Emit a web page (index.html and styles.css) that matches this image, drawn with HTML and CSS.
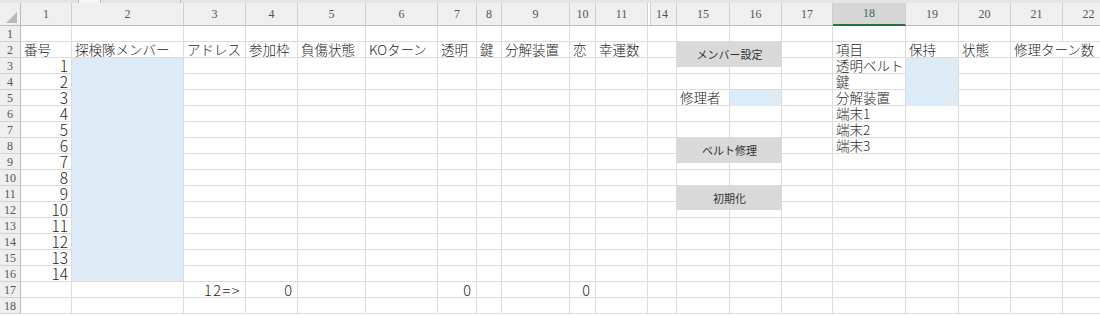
FILE: index.html
```html
<!DOCTYPE html>
<html lang="ja">
<head>
<meta charset="utf-8">
<title>シート</title>
<link rel="stylesheet" href="styles.css">
</head>
<body>
<div class="app">
  <div class="topbar"><i class="seg s1"></i><i class="seg s2"></i><i class="seg s3"></i></div>
  <div class="sheet">
    <div class="row colhead">
      <span class="corner"><i class="tri"></i></span><span>1</span><span>2</span><span>3</span><span>4</span><span>5</span><span>6</span><span>7</span><span>8</span><span>9</span><span>10</span><span>11</span><span class="hid">14</span><span>15</span><span>16</span><span>17</span><span class="sel">18</span><span>19</span><span>20</span><span>21</span><span>22</span>
    </div>
    <div class="row"><span class="rh">1</span><span></span><span></span><span></span><span></span><span></span><span></span><span></span><span></span><span></span><span></span><span></span><span></span><span></span><span></span><span></span><span></span><span></span><span></span><span></span><span></span></div>
    <div class="row"><span class="rh">2</span><span>番号</span><span>探検隊メンバー</span><span>アドレス</span><span>参加枠</span><span>負傷状態</span><span>KOターン</span><span>透明</span><span>鍵</span><span>分解装置</span><span>恋</span><span>幸運数</span><span></span><span></span><span></span><span></span><span>項目</span><span>保持</span><span>状態</span><span class="ov">修理ターン数</span><span></span></div>
    <div class="row"><span class="rh">3</span><span class="num">1</span><span class="fill"></span><span></span><span></span><span></span><span></span><span></span><span></span><span></span><span></span><span></span><span></span><span></span><span></span><span></span><span>透明ベルト</span><span class="fill"></span><span></span><span></span><span></span></div>
    <div class="row"><span class="rh">4</span><span class="num">2</span><span class="fill"></span><span></span><span></span><span></span><span></span><span></span><span></span><span></span><span></span><span></span><span></span><span></span><span></span><span></span><span>鍵</span><span class="fill"></span><span></span><span></span><span></span></div>
    <div class="row"><span class="rh">5</span><span class="num">3</span><span class="fill"></span><span></span><span></span><span></span><span></span><span></span><span></span><span></span><span></span><span></span><span></span><span>修理者</span><span class="fill"></span><span></span><span>分解装置</span><span class="fill"></span><span></span><span></span><span></span></div>
    <div class="row"><span class="rh">6</span><span class="num">4</span><span class="fill"></span><span></span><span></span><span></span><span></span><span></span><span></span><span></span><span></span><span></span><span></span><span></span><span></span><span></span><span>端末1</span><span></span><span></span><span></span><span></span></div>
    <div class="row"><span class="rh">7</span><span class="num">5</span><span class="fill"></span><span></span><span></span><span></span><span></span><span></span><span></span><span></span><span></span><span></span><span></span><span></span><span></span><span></span><span>端末2</span><span></span><span></span><span></span><span></span></div>
    <div class="row"><span class="rh">8</span><span class="num">6</span><span class="fill"></span><span></span><span></span><span></span><span></span><span></span><span></span><span></span><span></span><span></span><span></span><span></span><span></span><span></span><span>端末3</span><span></span><span></span><span></span><span></span></div>
    <div class="row"><span class="rh">9</span><span class="num">7</span><span class="fill"></span><span></span><span></span><span></span><span></span><span></span><span></span><span></span><span></span><span></span><span></span><span></span><span></span><span></span><span></span><span></span><span></span><span></span><span></span></div>
    <div class="row"><span class="rh">10</span><span class="num">8</span><span class="fill"></span><span></span><span></span><span></span><span></span><span></span><span></span><span></span><span></span><span></span><span></span><span></span><span></span><span></span><span></span><span></span><span></span><span></span><span></span></div>
    <div class="row"><span class="rh">11</span><span class="num">9</span><span class="fill"></span><span></span><span></span><span></span><span></span><span></span><span></span><span></span><span></span><span></span><span></span><span></span><span></span><span></span><span></span><span></span><span></span><span></span><span></span></div>
    <div class="row"><span class="rh">12</span><span class="num">10</span><span class="fill"></span><span></span><span></span><span></span><span></span><span></span><span></span><span></span><span></span><span></span><span></span><span></span><span></span><span></span><span></span><span></span><span></span><span></span><span></span></div>
    <div class="row"><span class="rh">13</span><span class="num">11</span><span class="fill"></span><span></span><span></span><span></span><span></span><span></span><span></span><span></span><span></span><span></span><span></span><span></span><span></span><span></span><span></span><span></span><span></span><span></span><span></span></div>
    <div class="row"><span class="rh">14</span><span class="num">12</span><span class="fill"></span><span></span><span></span><span></span><span></span><span></span><span></span><span></span><span></span><span></span><span></span><span></span><span></span><span></span><span></span><span></span><span></span><span></span><span></span></div>
    <div class="row"><span class="rh">15</span><span class="num">13</span><span class="fill"></span><span></span><span></span><span></span><span></span><span></span><span></span><span></span><span></span><span></span><span></span><span></span><span></span><span></span><span></span><span></span><span></span><span></span><span></span></div>
    <div class="row"><span class="rh">16</span><span class="num">14</span><span class="fill last"></span><span></span><span></span><span></span><span></span><span></span><span></span><span></span><span></span><span></span><span></span><span></span><span></span><span></span><span></span><span></span><span></span><span></span><span></span></div>
    <div class="row"><span class="rh">17</span><span></span><span></span><span class="val arrow">12=&gt;</span><span class="val">0</span><span></span><span></span><span class="val">0</span><span></span><span></span><span class="val">0</span><span></span><span></span><span></span><span></span><span></span><span></span><span></span><span></span><span></span><span></span></div>
    <div class="row"><span class="rh">18</span><span></span><span></span><span></span><span></span><span></span><span></span><span></span><span></span><span></span><span></span><span></span><span></span><span></span><span></span><span></span><span></span><span></span><span></span><span></span><span></span></div>
  </div>
  <div class="btn b1">メンバー設定</div>
  <div class="btn b2">ベルト修理</div>
  <div class="btn b3">初期化</div>
</div>
</body>
</html>
```

FILE: styles.css
```css
* {
  box-sizing: border-box;
  margin: 0;
  padding: 0;
}

body {
  width: 1100px;
  height: 315px;
  overflow: hidden;
  background: #ffffff;
  font-family: "Noto Sans CJK JP", "Noto Sans", sans-serif;
  font-weight: 300;
  color: #262626;
}

.app {
  position: relative;
  width: 1100px;
  height: 315px;
  overflow: hidden;
}

.topbar {
  height: 3px;
  background: #e4e4e4;
  display: flex;
}

.seg {
  display: block;
  height: 3px;
  border-right: 1px solid #b8b8b8;
}

.s1 { width: 79px; }
.s2 { width: 22px; background: #f4f4f4; }
.s3 { width: 80px; }

.row {
  display: grid;
  grid-template-columns: 21px 51px 112px 62px 52px 68px 72px 39px 25px 68px 26px 52px 29px 53px 52px 51px 73px 53px 52px 52px 52px;
  height: 16px;
  width: 1115px;
}

.row > span {
  display: flex;
  align-items: flex-end;
  padding: 0 3px;
  border-right: 1px solid #dcdcdc;
  border-bottom: 1px solid #dcdcdc;
  font-size: 13.5px;
  line-height: 15px;
  white-space: nowrap;
  overflow: visible;
}

.row > .ov {
  border-right-color: transparent;
}

.row > .num {
  justify-content: flex-end;
  font-size: 15.5px;
  line-height: 15px;
  padding-right: 3px;
}

.row > .val {
  justify-content: flex-end;
  font-size: 14.5px;
  line-height: 15px;
  padding-right: 5px;
}

.row > .arrow {
  letter-spacing: 1.5px;
  padding-right: 4px;
}

.row > .fill {
  background: #ddebf7;
  border-bottom-color: #ddebf7;
}

.row > .fill.last {
  border-bottom-color: #dcdcdc;
}

.row > .rh {
  background: #efefef;
  border-right-color: #bdbdbd;
  border-bottom-color: #d2d2d2;
  justify-content: center;
  align-items: center;
  padding: 0;
  font-family: "Liberation Serif", serif;
  font-weight: 400;
  font-size: 12px;
  line-height: 14px;
  color: #555555;
}

.colhead {
  height: 23px;
}

.colhead > span {
  background: #efefef;
  border-right-color: #cfcfcf;
  border-bottom-color: #bdbdbd;
  justify-content: center;
  align-items: center;
  padding: 0;
  font-family: "Liberation Serif", serif;
  font-weight: 400;
  font-size: 12px;
  color: #555555;
}

.colhead > .corner {
  position: relative;
  border-right-color: #bdbdbd;
}

.tri {
  position: absolute;
  right: 3px;
  bottom: 2px;
  width: 0;
  height: 0;
  border-left: 11px solid transparent;
  border-bottom: 11px solid #b9b9b9;
}

.colhead > .hid {
  box-shadow: inset 2px 0 0 #ffffff, inset 3px 0 0 #cfcfcf;
}

.colhead > .sel {
  background: #d6d6d6;
  border-bottom: 2px solid #217346;
  color: #3d6b4e;
}

.btn {
  position: absolute;
  left: 677px;
  width: 105px;
  height: 26px;
  background: #d9d9d9;
  display: flex;
  align-items: center;
  justify-content: center;
  font-size: 11px;
  font-weight: 400;
  color: #333333;
}

.b1 { top: 41px; }
.b2 { top: 137px; }
.b3 { top: 185px; height: 25px; }
```
